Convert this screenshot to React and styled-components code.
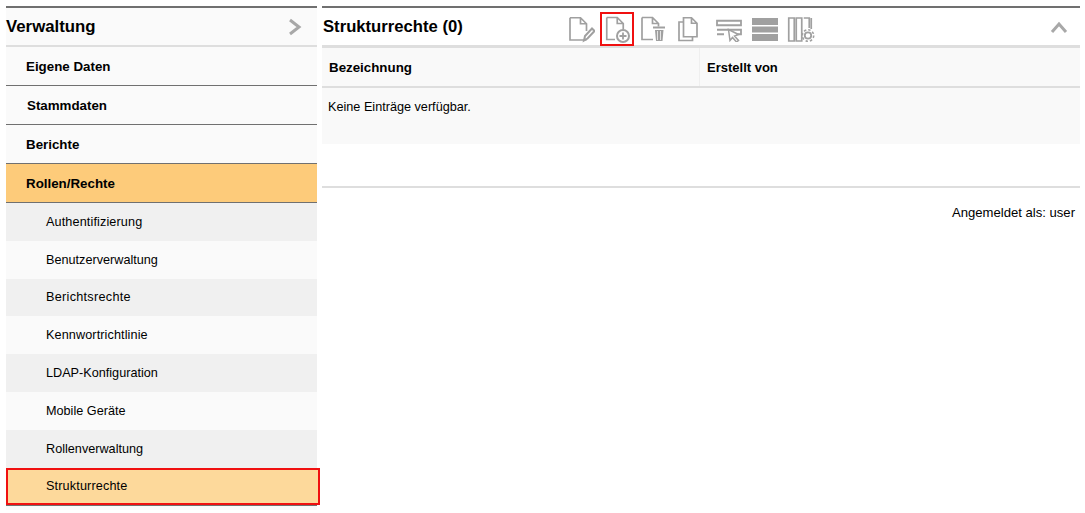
import React from 'react'
import styled, { createGlobalStyle } from 'styled-components'

const GlobalStyle = createGlobalStyle`
  html, body {
    margin: 0;
    padding: 0;
    background: #fff;
    color: #000;
    font-family: "Liberation Sans", Arial, sans-serif;
  }
  * {
    box-sizing: border-box;
  }
`

const Page = styled.div`
  display: flex;
  align-items: flex-start;
  gap: 5px;
  padding: 6px 5px 0 6px;
  width: 1085px;
  height: 513px;
  overflow: hidden;
`

const Sidebar = styled.aside`
  width: 311px;
  flex: none;
  background: #fafafa;
  border-top: 2px solid #707070;
  padding-bottom: 4px;
`

const SidebarHeader = styled.div`
  display: flex;
  align-items: center;
  justify-content: space-between;
  height: 39px;
  padding-right: 15px;
  border-bottom: 2px solid #dedede;
`

const SidebarTitle = styled.h1`
  margin: 0;
  font-size: 16.8px;
  font-weight: bold;
`

const MainItem = styled.div`
  display: flex;
  align-items: center;
  height: 39px;
  padding-left: ${(p) => p.$indent || 20}px;
  font-size: 13.33px;
  font-weight: bold;
  background: ${(p) => (p.$open ? '#fdcb7a' : 'transparent')};
  border-bottom: 1px solid #707070;
`

const SubList = styled.div`
  border-bottom: 1px solid #707070;
`

const SubItem = styled.div`
  display: flex;
  align-items: center;
  height: 37.8px;
  padding-left: 40px;
  font-size: 12.67px;
  letter-spacing: ${(p) => p.$track || 0}px;
  background: ${(p) => (p.$odd ? '#f0f0f0' : '#fafafa')};

  ${(p) =>
    p.$active &&
    `
    position: relative;
    background: #fdd99b;
    outline: 2px solid #f01010;
    outline-offset: -2px;
    width: 314px;
  `}
`

const Content = styled.main`
  flex: 1;
  min-width: 0;
`

const Panel = styled.section`
  border-top: 2px solid #707070;
`

const Toolbar = styled.div`
  display: flex;
  align-items: center;
  height: 40px;
  padding-right: 12px;
  border-bottom: 3px solid #dedede;
`

const PanelTitle = styled.h2`
  flex: 0 0 242px;
  margin: 0;
  padding-left: 1px;
  font-size: 16.67px;
  font-weight: bold;
`

const Tools = styled.div`
  display: flex;
  flex: 1;
  align-items: center;
  margin-top: 4px;
`

const ToolButton = styled.div`
  display: flex;
  align-items: center;
  justify-content: center;
  width: 34px;
  height: 34px;
  margin-left: ${(p) => (p.$first ? 0 : 2)}px;
  margin-right: ${(p) => (p.$groupEnd ? 4 : 0)}px;
  border: 2.5px solid ${(p) => (p.$highlight ? '#f01010' : 'transparent')};
`

const Table = styled.div`
  background: #f9f9f9;
  height: 96px;
`

const TableHead = styled.div`
  display: grid;
  grid-template-columns: 377px 1fr;
  height: 40px;
  border-bottom: 2px solid #dedede;
`

const HeadCell = styled.div`
  display: flex;
  align-items: center;
  padding-left: 7px;
  font-size: ${(p) => (p.$divider ? 13 : 13.33)}px;
  font-weight: bold;
  border-left: ${(p) => (p.$divider ? '1px solid #efefef' : 'none')};
`

const EmptyRow = styled.div`
  padding: 12px 6px;
  font-size: 12.67px;
  line-height: 14px;
`

const Footer = styled.div`
  margin-top: 42px;
  padding: 18px 5px 0 0;
  border-top: 2px solid #dedede;
  font-size: 13.1px;
  line-height: 14px;
  text-align: right;
`

const ICON = '#a0a0a0'

const Svg = ({ children, w = 28, h = 28 }) => (
  <svg width={w} height={h} viewBox={`0 0 ${w} ${h}`} fill="none" stroke={ICON} strokeWidth="1.7" style={{ flex: 'none' }}>
    {children}
  </svg>
)

const EditIcon = () => (
  <Svg>
    <path d="M3 2.750h10.500l6 6V16M19.500 25H3V2.750M13.500 2.750v6h6" />
    <path d="M17 25.500l1-4.500 7-7.500 2.500 2.500-7 7.500z" strokeWidth="2" />
  </Svg>
)

const AddIcon = () => (
  <Svg>
    <path d="M3.750 2.500h10.500l6 6v6M12 24.500H3.750v-22M14.250 2.500v6h6" />
    <circle cx="20" cy="21" r="6" strokeWidth="2" />
    <path d="M16.500 21h7M20 17.500v7" strokeWidth="1.800" />
  </Svg>
)

const TrashIcon = () => (
  <Svg>
    <path d="M3 2.500h10.500l6 6v3M14 24.500H3v-22M13.500 2.500v6h6" />
    <path d="M14 12.500h12" strokeWidth="2" />
    <path d="M16 15h8.500l-1 11h-6.500z" fill={ICON} stroke="none" />
    <path d="M18.500 16v9M21.500 16v9" stroke="#e4e4e4" strokeWidth="1" />
  </Svg>
)

const CopyIcon = () => (
  <Svg>
    <path d="M8.500 2.750h8l5.500 5.500v13.500H8.500zM16.500 2.750v5.500h5.500" />
    <path d="M8.500 7H4v18.500h13.500v-3.750" />
  </Svg>
)

const RowSelectIcon = () => (
  <Svg h={26}>
    <path d="M2 4.750h24v4.500H2zM2 13.750h24v4.500H14M9 18.250H2z" strokeWidth="1.800" />
    <path d="M13.500 13.500l10 5-4 1.500 4 4.500-2 1.500-4-4.500-2.500 3z" fill="#fff" strokeWidth="1.500" />
  </Svg>
)

const RowsIcon = () => (
  <Svg>
    <rect x="1" y="3" width="26" height="7" fill={ICON} stroke="none" />
    <rect x="1" y="11.500" width="26" height="6" fill={ICON} stroke="none" />
    <rect x="1" y="19" width="26" height="7" fill={ICON} stroke="none" />
  </Svg>
)

const ColumnsGearIcon = () => (
  <Svg>
    <path d="M1.750 3h5.500v23h-5.500zM9.250 3h5.500v23h-5.500zM16.750 3h5.500v10M24.250 3v11" />
    <circle cx="21" cy="20.500" r="3.200" strokeWidth="1.800" />
    <circle cx="21" cy="20.500" r="5.700" strokeWidth="1.600" strokeDasharray="2.400 2" />
  </Svg>
)

const ChevronRight = () => (
  <svg width="14" height="18" viewBox="0 0 14 18" fill="none" stroke="#a8a8a8" strokeWidth="3">
    <path d="M2 2l9 7-9 7" />
  </svg>
)

const ChevronUp = () => (
  <svg width="18" height="14" viewBox="0 0 18 14" fill="none" stroke="#a8a8a8" strokeWidth="3">
    <path d="M2 12l7-8 7 8" />
  </svg>
)

const subItems = [
  { name: 'Authentifizierung', track: 0.12 },
  { name: 'Benutzerverwaltung' },
  { name: 'Berichtsrechte', track: 0.28 },
  { name: 'Kennwortrichtlinie', track: 0.1 },
  { name: 'LDAP-Konfiguration' },
  { name: 'Mobile Geräte' },
  { name: 'Rollenverwaltung' },
  { name: 'Strukturrechte', track: 0.14 },
]

export default function App() {
  return (
    <>
      <GlobalStyle />
      <Page>
        <Sidebar>
          <SidebarHeader>
            <SidebarTitle>Verwaltung</SidebarTitle>
            <ChevronRight />
          </SidebarHeader>
          <MainItem>Eigene Daten</MainItem>
          <MainItem $indent={21}>Stammdaten</MainItem>
          <MainItem>Berichte</MainItem>
          <MainItem $open>Rollen/Rechte</MainItem>
          <SubList>
            {subItems.map((item, i) => (
              <SubItem
                key={item.name}
                $odd={i % 2 === 0}
                $track={item.track}
                $active={item.name === 'Strukturrechte'}
              >
                {item.name}
              </SubItem>
            ))}
          </SubList>
        </Sidebar>
        <Content>
          <Panel>
            <Toolbar>
              <PanelTitle>Strukturrechte (0)</PanelTitle>
              <Tools>
                <ToolButton $first>
                  <EditIcon />
                </ToolButton>
                <ToolButton $highlight>
                  <AddIcon />
                </ToolButton>
                <ToolButton>
                  <TrashIcon />
                </ToolButton>
                <ToolButton $groupEnd>
                  <CopyIcon />
                </ToolButton>
                <ToolButton>
                  <RowSelectIcon />
                </ToolButton>
                <ToolButton>
                  <RowsIcon />
                </ToolButton>
                <ToolButton>
                  <ColumnsGearIcon />
                </ToolButton>
              </Tools>
              <ChevronUp />
            </Toolbar>
            <Table>
              <TableHead>
                <HeadCell>Bezeichnung</HeadCell>
                <HeadCell $divider>Erstellt von</HeadCell>
              </TableHead>
              <EmptyRow>Keine Einträge verfügbar.</EmptyRow>
            </Table>
          </Panel>
          <Footer>Angemeldet als: user</Footer>
        </Content>
      </Page>
    </>
  )
}
